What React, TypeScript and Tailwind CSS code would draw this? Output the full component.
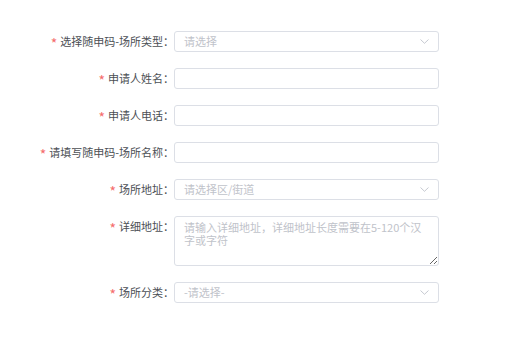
import React from "react";

const font = { fontFamily: '"Noto Sans CJK SC", "Noto Sans", sans-serif' };

const Chevron: React.FC = () => (
  <svg width="9" height="5" viewBox="0 0 9 5" className="shrink-0">
    <path d="M0.5 0.5 L4.5 4.3 L8.5 0.5" fill="none" stroke="#c0c4cc" strokeWidth="0.9" />
  </svg>
);

const Label: React.FC<{ text: string }> = ({ text }) => (
  <div className="w-[174px] shrink-0 text-right text-[11px] leading-[21px] text-[#4c4f55] whitespace-nowrap">
    <span className="inline-block text-[14px] leading-none text-[#f56c6c] mr-[3px] translate-y-[3px]">*</span>
    {text}：
  </div>
);

const SelectBox: React.FC<{ placeholder: string }> = ({ placeholder }) => (
  <div className="w-[265px] h-[21px] border border-[#dcdfe6] rounded-[3px] bg-white flex items-center justify-between pl-[9px] pr-[9px]">
    <span className="text-[11px] text-[#bfc3ca]">{placeholder}</span>
    <Chevron />
  </div>
);

const TextBox: React.FC = () => (
  <input
    className="w-[265px] h-[21px] border border-[#dcdfe6] rounded-[3px] bg-white px-[9px] text-[11px] outline-none"
    style={font}
  />
);

export default function App() {
  return (
    <div className="w-[532px] h-[341px] bg-white pt-[31px]" style={font}>
      <div className="flex flex-col gap-[16px]">
        <div className="flex">
          <Label text="选择随申码-场所类型" />
          <SelectBox placeholder="请选择" />
        </div>
        <div className="flex">
          <Label text="申请人姓名" />
          <TextBox />
        </div>
        <div className="flex">
          <Label text="申请人电话" />
          <TextBox />
        </div>
        <div className="flex">
          <Label text="请填写随申码-场所名称" />
          <TextBox />
        </div>
        <div className="flex">
          <Label text="场所地址" />
          <SelectBox placeholder="请选择区/街道" />
        </div>
        <div className="flex">
          <Label text="详细地址" />
          <textarea
            className="w-[265px] h-[50px] border border-[#dcdfe6] rounded-[3px] bg-white px-[9px] pt-[4px] text-[11px] leading-[12.7px] outline-none placeholder:text-[#bfc3ca]"
            style={font}
            placeholder="请输入详细地址，详细地址长度需要在5-120个汉字或字符"
          />
        </div>
        <div className="flex">
          <Label text="场所分类" />
          <SelectBox placeholder="-请选择-" />
        </div>
      </div>
    </div>
  );
}
